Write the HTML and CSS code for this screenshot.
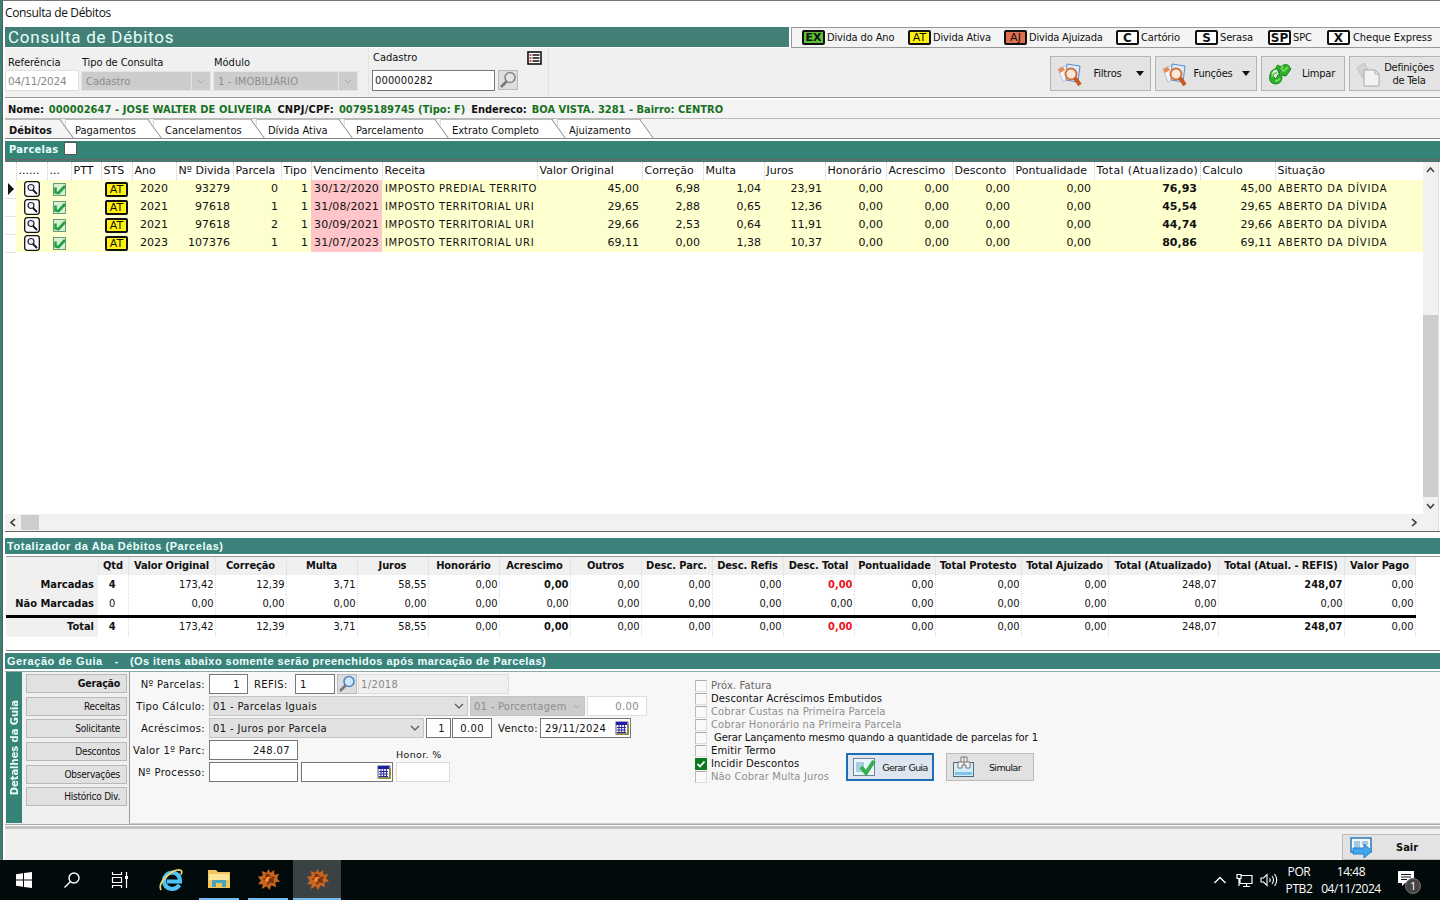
FILE: index.html
```html
<!DOCTYPE html>
<html lang="pt-BR">
<head>
    <meta charset="UTF-8">
    <meta name="viewport" content="width=device-width, initial-scale=1.0">
    <title>Consulta de Débitos</title>
    <link rel="stylesheet" href="styles.css">
</head>
<body>
    <svg class="sprite">
        <symbol id="lupa" viewBox="0 0 16 16">
            <rect x=".7" y=".7" width="14.6" height="14.6" rx="2.5" fill="#fff" stroke="#111" stroke-width="1.3"/>
            <circle cx="7" cy="6.5" r="3" fill="#eef" stroke="#223" stroke-width="1.2"/>
            <path d="M9 9l4 4" stroke="#112" stroke-width="1.8"/>
        </symbol>
        <symbol id="marca" viewBox="0 0 13 13">
            <rect x=".5" y=".5" width="12" height="12" fill="#d9efd2" stroke="#6a9a78"/>
            <path d="M2.500 4.500v5l3 .5L12 3" fill="none" stroke="#21a044" stroke-width="2.600"/>
        </symbol>
        <symbol id="busca" viewBox="0 0 28 26">
            <path d="M2 8l12-5 4 12-11 6z" fill="#f4f5fa" stroke="#b9bfd0"/>
            <path d="M11 3l13 2-2 16-12-2z" fill="#dfeafa" stroke="#5b8cc8"/>
            <path d="M2 8l5-2 2 3-5 3z" fill="#e98a55"/>
            <circle cx="15" cy="13" r="5.5" fill="#fbe9dc" stroke="#d0743e" stroke-width="2"/>
            <path d="M19 17l5 7" stroke="#c45a25" stroke-width="4"/>
        </symbol>
        <symbol id="pesquisa" viewBox="0 0 18 18">
            <circle cx="11" cy="6.500" r="5" fill="#cfe6fb" stroke="currentColor" stroke-width="1.6"/>
            <path d="M7.500 10.500L2 16" stroke="#777" stroke-width="2.6"/>
        </symbol>
        <symbol id="calendario" viewBox="0 0 14 14">
            <rect x="1" y="1" width="12" height="12" fill="#fff" stroke="#555"/>
            <rect x="1" y="1" width="11" height="3" fill="#1b1bb0"/>
            <path d="M2 6.500h9M2 9h9M2 11.500h9M4 4v8M6.700 4v8M9.400 4v8" stroke="#2828a0"/>
            <path d="M13 3v10H2" fill="none" stroke="#8a8420" stroke-width="1.600"/>
        </symbol>
        <symbol id="engrenagem" viewBox="0 0 24 24">
            <path d="M12 1l2 4 4-3v5l5-1-2 5 3 3-5 1 1 5-5-2-2 5-3-4-5 3 1-5-5 0 3-4-3-4 5-1-1-5 5 2z" fill="#c9651f"/>
            <path d="M12 6l3 3 4 0-2 3 1 4-4-1-3 3-1-4-4-2 3-2 0-4z" fill="#7a3310"/>
            <path d="M8 13q2-6 8-3-5 0-4 5z" fill="#ff8d35"/>
        </symbol>
    </svg>

    <div class="window">
        <div class="titlebar">Consulta de Débitos</div>

        <div class="header">
            <div class="header-title"><span>Consulta de Débitos</span></div>
            <div class="legend">
                <span class="tag ex">EX</span><span class="leg l1">Divida do Ano</span>
                <span class="tag at">AT</span><span class="leg l2">Divida Ativa</span>
                <span class="tag aj">AJ</span><span class="leg l3">Divida Ajuizada</span>
                <span class="tag">C</span><span class="leg l4">Cartório</span>
                <span class="tag">S</span><span class="leg l5">Serasa</span>
                <span class="tag">SP</span><span class="leg l6">SPC</span>
                <span class="tag">X</span><span class="leg l7">Cheque Express</span>
            </div>
        </div>

        <div class="toolbar">
            <div class="filter f-ref"><label>Referência</label><div class="box off">04/11/2024</div></div>
            <div class="filter f-tipo"><label>Tipo de Consulta</label><div class="drop">Cadastro<i><svg width="8" height="5"><path d="M1 1l3 3 3-3" fill="none" stroke="#aaa"/></svg></i></div></div>
            <div class="filter f-mod"><label>Módulo</label><div class="drop">1 - IMOBILIÁRIO<i><svg width="8" height="5"><path d="M1 1l3 3 3-3" fill="none" stroke="#aaa"/></svg></i></div></div>
            <div class="filter f-cad">
                <div class="cad-head"><label>Cadastro</label>
                    <svg width="15" height="14"><rect x="1" y="1" width="13" height="12" fill="#fff" stroke="#111" stroke-width="1.600"/><path d="M5.500 4h7M5.500 7h7M5.500 10h7" stroke="#111" stroke-width="1.500"/><path d="M2.500 4h2M2.500 7h2M2.500 10h2" stroke="#a22" stroke-width="1.500"/></svg>
                </div>
                <div class="cad-row"><div class="box">000000282</div><span class="mini"><svg class="gray" width="18" height="18"><use href="#pesquisa"/></svg></span></div>
            </div>
            <div class="actions">
                <div class="tool b1"><svg width="28" height="26"><use href="#busca"/></svg><span>Filtros</span><b class="arrow"></b></div>
                <div class="tool b2"><svg width="28" height="26"><use href="#busca"/></svg><span>Funções</span><b class="arrow"></b></div>
                <div class="tool b3">
                    <svg width="26" height="26" viewBox="0 0 26 26"><path d="M3 15q0-7 7-7l2 4 3-6-5-2M12 10q2-8 9-6l3 4-5 7-7-1zM3 14q-2 8 5 9 7 0 7-7l-4-2-2 4-4-4z" fill="#2fae2b" stroke="#1b8a22"/><path d="M5 16q1-4 5-4M16 5q-3 3 1 5l4-4M8 20q4 0 5-3" fill="none" stroke="#6bd853" stroke-width="2"/></svg>
                    <span>Limpar</span>
                </div>
                <div class="tool b4">
                    <svg width="26" height="28" viewBox="0 0 26 28"><path d="M2 8l7-5 4 7-7 5zM6 16l6-3v8z" fill="#d3d3d3" stroke="#c0c0c0"/><path d="M9 10h11l4 4v12H9z" fill="#f3f3f3" stroke="#aaa"/><path d="M20 10v4h4" fill="none" stroke="#aaa"/></svg>
                    <span>Definições<br>de Tela</span>
                </div>
            </div>
        </div>

        <div class="person"><b>Nome:</b><em class="p1">000002647 - JOSE WALTER DE OLIVEIRA</em><b class="n2">CNPJ/CPF:</b><em class="p2">00795189745 (Tipo: F)</em><b>Endereco:</b><em class="p3">BOA VISTA. 3281 - Bairro: CENTRO</em></div>

        <div class="tabs">
            <div class="tab t1 active">Débitos</div>
            <div class="tab t2">Pagamentos</div>
            <div class="tab t3">Cancelamentos</div>
            <div class="tab t4">Dívida Ativa</div>
            <div class="tab t5">Parcelamento</div>
            <div class="tab t6">Extrato Completo</div>
            <div class="tab t7">Ajuizamento</div>
        </div>

        <div class="parcelas-bar"><span>Parcelas</span><i></i></div>

        <div class="grid-box">
            <div class="grid-main">
                <table class="grid">
                    <colgroup>
                        <col style="width:11px"><col style="width:31px"><col style="width:24px"><col style="width:30px"><col style="width:31px"><col style="width:44px"><col style="width:57px"><col style="width:48px"><col style="width:30px"><col style="width:71px"><col style="width:155px"><col style="width:105px"><col style="width:61px"><col style="width:61px"><col style="width:61px"><col style="width:61px"><col style="width:66px"><col style="width:61px"><col style="width:81px"><col style="width:106px"><col style="width:75px"><col style="width:148px">
                    </colgroup>
                    <thead>
                        <tr><th></th><th>......</th><th>...</th><th>PTT</th><th>STS</th><th>Ano</th><th class="tight">Nº Divida</th><th>Parcela</th><th>Tipo</th><th class="tight">Vencimento</th><th>Receita</th><th>Valor Original</th><th>Correção</th><th>Multa</th><th>Juros</th><th>Honorário</th><th>Acrescimo</th><th>Desconto</th><th>Pontualidade</th><th class="wide">Total (Atualizado)</th><th>Calculo</th><th>Situação</th></tr>
                    </thead>
                    <tbody>
                        <tr><td class="ind"><b></b></td><td class="ic"><svg width="16" height="16"><use href="#lupa"/></svg></td><td class="ic"><svg width="13" height="13"><use href="#marca"/></svg></td><td></td><td class="ic"><span class="tag at">AT</span></td><td class="c">2020</td><td>93279</td><td>0</td><td>1</td><td class="venc">30/12/2020</td><td class="txt rec">IMPOSTO PREDIAL TERRITO</td><td>45,00</td><td>6,98</td><td>1,04</td><td>23,91</td><td>0,00</td><td>0,00</td><td>0,00</td><td>0,00</td><td class="tot">76,93</td><td>45,00</td><td class="txt">ABERTO DA DÍVIDA</td></tr>
                        <tr><td class="ind"></td><td class="ic"><svg width="16" height="16"><use href="#lupa"/></svg></td><td class="ic"><svg width="13" height="13"><use href="#marca"/></svg></td><td></td><td class="ic"><span class="tag at">AT</span></td><td class="c">2021</td><td>97618</td><td>1</td><td>1</td><td class="venc">31/08/2021</td><td class="txt rec">IMPOSTO TERRITORIAL URI</td><td>29,65</td><td>2,88</td><td>0,65</td><td>12,36</td><td>0,00</td><td>0,00</td><td>0,00</td><td>0,00</td><td class="tot">45,54</td><td>29,65</td><td class="txt">ABERTO DA DÍVIDA</td></tr>
                        <tr><td class="ind"></td><td class="ic"><svg width="16" height="16"><use href="#lupa"/></svg></td><td class="ic"><svg width="13" height="13"><use href="#marca"/></svg></td><td></td><td class="ic"><span class="tag at">AT</span></td><td class="c">2021</td><td>97618</td><td>2</td><td>1</td><td class="venc">30/09/2021</td><td class="txt rec">IMPOSTO TERRITORIAL URI</td><td>29,66</td><td>2,53</td><td>0,64</td><td>11,91</td><td>0,00</td><td>0,00</td><td>0,00</td><td>0,00</td><td class="tot">44,74</td><td>29,66</td><td class="txt">ABERTO DA DÍVIDA</td></tr>
                        <tr><td class="ind"></td><td class="ic"><svg width="16" height="16"><use href="#lupa"/></svg></td><td class="ic"><svg width="13" height="13"><use href="#marca"/></svg></td><td></td><td class="ic"><span class="tag at">AT</span></td><td class="c">2023</td><td>107376</td><td>1</td><td>1</td><td class="venc">31/07/2023</td><td class="txt rec">IMPOSTO TERRITORIAL URI</td><td>69,11</td><td>0,00</td><td>1,38</td><td>10,37</td><td>0,00</td><td>0,00</td><td>0,00</td><td>0,00</td><td class="tot">80,86</td><td>69,11</td><td class="txt">ABERTO DA DÍVIDA</td></tr>
                    </tbody>
                </table>
                <div class="hscroll">
                    <svg width="16" height="15"><path d="M10 4L6 7.500l4 3.500" fill="none" stroke="#333" stroke-width="1.600"/></svg>
                    <i></i>
                    <svg width="16" height="15"><path d="M5 4l4 3.500L5 11" fill="none" stroke="#333" stroke-width="1.600"/></svg>
                </div>
            </div>
            <div class="vscroll">
                <svg width="15" height="16"><path d="M4 10l3.500-4L11 10" fill="none" stroke="#444" stroke-width="1.600"/></svg>
                <i></i>
                <svg width="15" height="16"><path d="M4 6l3.500 4L11 6" fill="none" stroke="#444" stroke-width="1.600"/></svg>
            </div>
        </div>

        <div class="bar bar-total"><span>Totalizador da Aba Débitos (Parcelas)</span></div>

        <div class="totals-box">
            <table class="totals">
                <colgroup>
                    <col style="width:92px"><col style="width:30px"><col style="width:87px"><col style="width:71px"><col style="width:71px"><col style="width:71px"><col style="width:71px"><col style="width:71px"><col style="width:71px"><col style="width:71px"><col style="width:71px"><col style="width:71px"><col style="width:81px"><col style="width:86px"><col style="width:87px"><col style="width:110px"><col style="width:126px"><col style="width:71px">
                </colgroup>
                <tr class="head"><th></th><th>Qtd</th><th>Valor Original</th><th>Correção</th><th>Multa</th><th>Juros</th><th>Honorário</th><th>Acrescimo</th><th>Outros</th><th>Desc. Parc.</th><th>Desc. Refis</th><th>Desc. Total</th><th>Pontualidade</th><th>Total Protesto</th><th>Total Ajuizado</th><th>Total (Atualizado)</th><th>Total (Atual. - REFIS)</th><th>Valor Pago</th></tr>
                <tr><th>Marcadas</th><td class="q"><b>4</b></td><td>173,42</td><td>12,39</td><td>3,71</td><td>58,55</td><td>0,00</td><td><b>0,00</b></td><td>0,00</td><td>0,00</td><td>0,00</td><td class="red">0,00</td><td>0,00</td><td>0,00</td><td>0,00</td><td>248,07</td><td><b>248,07</b></td><td>0,00</td></tr>
                <tr class="nao"><th>Não Marcadas</th><td class="q">0</td><td>0,00</td><td>0,00</td><td>0,00</td><td>0,00</td><td>0,00</td><td>0,00</td><td>0,00</td><td>0,00</td><td>0,00</td><td>0,00</td><td>0,00</td><td>0,00</td><td>0,00</td><td>0,00</td><td>0,00</td><td>0,00</td></tr>
                <tr class="sum"><th>Total</th><td class="q"><b>4</b></td><td>173,42</td><td>12,39</td><td>3,71</td><td>58,55</td><td>0,00</td><td><b>0,00</b></td><td>0,00</td><td>0,00</td><td>0,00</td><td class="red">0,00</td><td>0,00</td><td>0,00</td><td>0,00</td><td>248,07</td><td><b>248,07</b></td><td>0,00</td></tr>
            </table>
        </div>

        <div class="bar bar-guia"><span>Geração de Guia</span><span class="dash">-</span><span class="hint">(Os itens abaixo somente serão preenchidos após marcação de Parcelas)</span></div>

        <div class="guia">
            <div class="side"><span>Detalhes da Guia</span></div>
            <div class="menu">
                <div class="on">Geração</div>
                <div>Receitas</div>
                <div>Solicitante</div>
                <div>Descontos</div>
                <div>Observações</div>
                <div>Histórico Div.</div>
            </div>
            <div class="panel">
                <div class="form">
                    <div class="row"><label>Nº Parcelas:</label><div class="in w39 r">1</div><label class="refis">REFIS:</label><div class="in w40">1</div><span class="mini m2"><svg width="18" height="18"><use href="#pesquisa"/></svg></span><div class="in off w150">1/2018</div></div>
                    <div class="row"><label>Tipo Cálculo:</label><div class="sel w259">01 - Parcelas Iguais<svg width="10" height="6"><path d="M1 1l4 4 4-4" fill="none" stroke="#555" stroke-width="1.200"/></svg></div><div class="sel dis w115">01 - Porcentagem<svg width="8" height="5"><path d="M1 1l3 3 3-3" fill="none" stroke="#aaa"/></svg></div><div class="in off white w59 r">0.00</div></div>
                    <div class="row"><label>Acréscimos:</label><div class="sel w214">01 - Juros por Parcela<svg width="10" height="6"><path d="M1 1l4 4 4-4" fill="none" stroke="#555" stroke-width="1.200"/></svg></div><div class="in w25 r">1</div><div class="in w39b r">0.00</div><label class="venct">Vencto:</label><div class="in w88">29/11/2024<svg width="14" height="14"><use href="#calendario"/></svg></div></div>
                    <div class="row"><label>Valor 1º Parc:</label><div class="in w89 r">248.07</div><label class="honor">Honor. %</label></div>
                    <div class="row"><label>Nº Processo:</label><div class="in w89"></div><div class="in w91"><svg width="14" height="14"><use href="#calendario"/></svg></div><div class="in off white w53"></div></div>
                </div>
                <div class="options">
                    <div class="chk dim2"><i></i>Próx. Fatura</div>
                    <div class="chk"><i></i>Descontar Acréscimos Embutidos</div>
                    <div class="chk dim"><i></i>Cobrar Custas na Primeira Parcela</div>
                    <div class="chk dim"><i></i>Cobrar Honorário na Primeira Parcela</div>
                    <div class="chk gerar"><i></i>Gerar Lançamento mesmo quando a quantidade de parcelas for 1</div>
                    <div class="opt-bottom">
                        <div class="opt-list">
                            <div class="chk"><i></i>Emitir Termo</div>
                            <div class="chk"><i class="yes"><svg width="10" height="10"><path d="M1.500 5l2.500 2.500L8.500 2.500" fill="none" stroke="#fff" stroke-width="1.800"/></svg></i>Incidir Descontos</div>
                            <div class="chk dim"><i></i>Não Cobrar Multa Juros</div>
                        </div>
                        <div class="go focus"><svg width="26" height="24" viewBox="0 0 26 24"><rect x="1.500" y="3.500" width="21" height="17" fill="#e9f5fb" stroke="#6b8796"/><path d="M4 7h8v10H4z" fill="#a9cde0"/><path d="M9 12l5 6L22 6" fill="none" stroke="#35b050" stroke-width="4"/></svg><span>Gerar Guia</span></div>
                        <div class="go"><svg class="down" width="26" height="24" viewBox="0 0 26 24"><rect x="2.500" y="7.500" width="20" height="14" fill="#d4ecf8" stroke="#4c6c80"/><path d="M10 7V2h6v5M13 2v8M7 7h12v6h-4v-3h-4v3H7z" fill="#f5f5f5" stroke="#777"/><path d="M4 17h17v3H4z" fill="#7fc4e6"/></svg><span>Simular</span></div>
                    </div>
                </div>
            </div>
        </div>

        <div class="footer">
            <div class="sair"><svg width="26" height="24" viewBox="0 0 26 24"><rect x="2" y="3" width="20" height="14" fill="#eef7fc" stroke="#2b7ab8" stroke-width="1.500"/><path d="M5 6h6v7H5zM13 6h6v4h-6z" fill="#a7c8dc"/><path d="M4 13h11v-4l8 7-8 7v-4H4z" fill="#42a5ee" stroke="#1e7fcb"/></svg><span>Sair</span></div>
        </div>
    </div>

    <div class="taskbar">
        <div class="task"><svg width="16" height="16"><path d="M0 2.200l7-1v6.300H0zM8 1.100L16 0v7.500H8zM0 8.500h7v6.300l-7-1zM8 8.500h8V16l-8-1.100z" fill="#fff"/></svg></div>
        <div class="task"><svg width="18" height="18"><circle cx="11" cy="7" r="5" fill="none" stroke="#fff" stroke-width="1.400"/><path d="M7.500 10.500L1.500 16.500" stroke="#fff" stroke-width="1.500"/></svg></div>
        <div class="task"><svg width="18" height="16"><path d="M1.500 0v2.500h9V0M1.500 16v-2.500h9V16M1.500 5.500h9v5h-9zM15.500 0v16" fill="none" stroke="#fff" stroke-width="1.200"/><path d="M14 4h3v3h-3z" fill="#fff"/></svg></div>
        <div class="task ie"><svg width="26" height="26" viewBox="0 0 26 26"><path d="M21.500 18Q18.500 22 14 22 6.500 21.500 6 14 6.500 6 14 5.500q8 .5 8 9H9" fill="none" stroke="#4fc3f3" stroke-width="4.200"/><path d="M3 23Q0 17 9 9T23 3.500q1.500 1 0 4" fill="none" stroke="#f3d768" stroke-width="1.700"/></svg></div>
        <div class="task open"><svg width="22" height="20"><path d="M0 1h8l2 2h12v16H0z" fill="#f2c55c"/><path d="M1 5h20v6H1z" fill="#fde59a"/><path d="M4 18v-7h14v7h-4v-4H8v4z" fill="#4aa3b8"/></svg></div>
        <div class="task open"><svg width="23" height="23"><use href="#engrenagem"/></svg></div>
        <div class="task open current"><svg width="23" height="23"><use href="#engrenagem"/></svg></div>
        <div class="tray">
            <svg width="14" height="8"><path d="M1.500 7L7 1.500 12.500 7" fill="none" stroke="#fff" stroke-width="1.300"/></svg>
            <svg class="net" width="18" height="15"><path d="M5 2.500h11v8H4M4 6v4.500M1 1.500h4v4H1zM3 5.500V13M7 13.500h7M10.500 10.500v3" fill="none" stroke="#fff" stroke-width="1.200"/></svg>
            <svg class="vol" width="18" height="14"><path d="M1 5h2.500L7 1.500v11L3.500 9H1zM9.500 5q1.500 2 0 4M12 3q3 4 0 8M14.500 1q4.500 6 0 12" fill="none" stroke="#fff" stroke-width="1.100"/></svg>
            <div class="lang">POR<br>PTB2</div>
            <div class="clock">14:48<br>04/11/2024</div>
            <svg class="note" width="26" height="26" viewBox="0 0 26 26"><path d="M1 2h16v12H8l-3 3v-3H1z" fill="#fff"/><path d="M4 5.500h10M4 8h10M4 10.500h6" stroke="#111"/><circle cx="16" cy="17" r="7.500" fill="#444" stroke="#777"/><text x="16" y="21" text-anchor="middle" font-size="11" font-family="Open Sans, sans-serif" fill="#fff">1</text></svg>
        </div>
    </div>
</body>
</html>
```

FILE: styles.css
```css
* {
    box-sizing: border-box;
}
body {
    margin: 0;
    width: 1440px;
    height: 900px;
    overflow: hidden;
    background: #3a7f78;
    font-family: "DejaVu Sans Condensed", "DejaVu Sans", sans-serif;
    font-stretch: condensed;
    font-size: 11px;
    color: #111;
    white-space: nowrap;
}
svg {
    display: block;
    flex: none;
}
.sprite {
    display: none;
}
.window {
    height: 860px;
    margin-left: 2px;
    border-left: 1px solid #5c5c5c;
    border-top: 1px solid #777;
    background: #fff;
    display: flex;
    flex-direction: column;
    padding-left: 2px;
}
.window > div {
    flex: none;
}
.titlebar {
    height: 26px;
    font: 12px/24px "Open Sans", sans-serif;
    letter-spacing: -0.35px;
}

/* header + legend */
.header {
    height: 21px;
    display: flex;
}
.header-title {
    width: 784px;
    height: 20px;
    background: #447f77;
    color: #e2fffb;
    font: 17px/20px Roboto, "Liberation Sans", sans-serif;
    letter-spacing: 0.75px;
    padding-left: 3px;
}
.legend {
    flex: 1;
    margin-left: 2px;
    background: #f4f4f4;
    border: 1px solid #999;
    border-right: none;
    display: flex;
    align-items: center;
    padding-left: 10px;
    font-size: 11px;
}
.tag {
    display: inline-block;
    width: 23px;
    height: 15px;
    border: 2px solid #111;
    border-radius: 2px;
    background: #fff;
    font: bold 12px/12px "DejaVu Sans", sans-serif;
    text-align: center;
    flex: none;
}
.ex { background: #5cc034; font-size: 11px; }
.at { background: #fff20a; font-weight: normal; font-size: 11px; }
.aj { background: #e07050; font-weight: normal; font-size: 11px; }
.leg {
    padding-left: 2px;
    letter-spacing: -0.13px;
}
.l1 { width: 83px; }
.l2 { width: 73px; }
.l3 { width: 89px; letter-spacing: -0.2px; }
.l4 { width: 56px; }
.l5 { width: 50px; }
.l6 { width: 36px; }
.l7 { padding-left: 3px; letter-spacing: -0.05px; }

/* toolbar */
.toolbar {
    height: 50px;
    background: #f0f0f0;
    border-bottom: 1px solid #999;
    display: flex;
}
.filter {
    padding-top: 7px;
}
.filter label {
    display: block;
    height: 15px;
    line-height: 15px;
}
.f-ref { width: 76px; }
.f-ref label { padding-left: 3px; }
.f-tipo { width: 132px; }
.f-tipo label { padding-left: 1px; letter-spacing: -0.1px; }
.f-mod { width: 155px; }
.f-mod label { padding-left: 1px; }
.box {
    height: 21px;
    border: 1px solid #777;
    background: #fff;
    line-height: 20px;
    padding-left: 3px;
}
.box.off {
    width: 74px;
    border-color: #e0e0e0;
    color: #888;
    font-family: "DejaVu Sans", sans-serif;
    font-stretch: normal;
    font-size: 10.5px;
    letter-spacing: -0.2px;
    padding-left: 2px;
}
.drop {
    height: 20px;
    background: #ccc;
    border: 1px solid #e4e4e4;
    line-height: 19px;
    color: #8c8c8c;
    display: flex;
    justify-content: space-between;
    padding-left: 4px;
    margin-top: 1px;
}
.drop i {
    width: 19px;
    border-left: 1px solid #e4e4e4;
    display: flex;
    align-items: center;
    justify-content: center;
}
.f-tipo .drop { width: 130px; }
.f-mod .drop { width: 145px; letter-spacing: 0.15px; }
.f-cad {
    width: 181px;
    padding: 3px 0 0 3px;
    border-left: 1px solid #e4e4e4;
    border-right: 1px solid #e4e4e4;
}
.cad-head {
    display: flex;
    justify-content: space-between;
    padding-right: 6px;
    height: 19px;
    padding-left: 1px;
}
.cad-head label { line-height: 13px; }
.cad-row {
    display: flex;
    gap: 3px;
}
.cad-row .box {
    width: 123px;
    padding-left: 2px;
    letter-spacing: 0.15px;
}
.mini {
    width: 20px;
    height: 20px;
    background: #ddd;
    border: 1px solid #bbb;
    color: #4a86c4;
}
.gray {
    color: #888;
    filter: grayscale(1);
}
.actions {
    margin-left: auto;
    display: flex;
    padding-top: 8px;
}
.tool {
    height: 35px;
    background: #e3e3e3;
    border: 1px solid #b4b4b4;
    display: flex;
    align-items: center;
    padding-left: 5px;
}
.tool span {
    flex: 1;
    text-align: center;
    line-height: 13px;
    letter-spacing: -0.2px;
}
.b1 { width: 101px; margin-right: 4px; }
.b2 { width: 102px; margin-right: 4px; }
.b3 { width: 84px; margin-right: 4px; }
.b4 { width: 91px; border-right: none; padding-right: 3px; }
.b1 span, .b2 span { padding-right: 5px; }
.arrow {
    border: 4px solid transparent;
    border-top: 5px solid #111;
    border-bottom: 0;
    margin-right: 6px;
}

/* taxpayer line */
.person {
    height: 21px;
    background: #f4f4f4;
    border-top: 2px solid #fff;
    border-bottom: 1px solid #bbb;
    line-height: 19px;
    padding-left: 3px;
    font-weight: bold;
    display: flex;
}
.person em {
    font-style: normal;
    color: #15711d;
    padding: 0 6px 0 5px;
}
.person b { letter-spacing: -0.05px; }
.person .p1 { letter-spacing: 0.08px; }
.person .n2 { letter-spacing: 0.2px; }

/* tabs */
.tabs {
    height: 20px;
    background: #f4f4f4;
    display: flex;
    border-bottom: 1px solid #888;
    position: relative;
    z-index: 0;
}
.tab {
    background: #fff;
    clip-path: polygon(0 0, calc(100% - 14px) 0, 100% 100%, 0 100%);
    position: relative;
    line-height: 21px;
    border-top: 1px solid #bbb;
    padding-left: 11px;
    margin-right: -10px;
}
.tab::after {
    content: "";
    position: absolute;
    right: 7px;
    top: -3px;
    height: 26px;
    border-right: 1px solid #999;
    transform: rotate(-36deg);
}
.active {
    font-weight: bold;
    padding-left: 4px;
    background: #f4f4f4;
}
.t1 { width: 70px; z-index: 7; }
.t2 { width: 98px; z-index: 6; padding-left: 9px; }
.t3 { width: 113px; z-index: 5; }
.t4 { width: 98px; z-index: 4; }
.t5 { width: 106px; z-index: 3; }
.t6 { width: 127px; z-index: 2; }
.t7 { width: 98px; z-index: 1; }
.tab:not(.active) { border-left: 1px solid #ddd; }

.parcelas-bar {
    height: 23px;
    background: #368478;
    border-top: 2px solid #fff;
    border-bottom: 3px double #666;
    color: #e8fffb;
    font-weight: bold;
    line-height: 18px;
    padding-left: 4px;
    display: flex;
}
.parcelas-bar span { letter-spacing: 0.3px; }
.parcelas-bar i {
    width: 13px;
    height: 13px;
    margin: 1px 0 0 6px;
    background: #fff;
    border: 1px solid #555;
}

/* debts grid */
.grid-box {
    height: 370px;
    display: flex;
    border-bottom: 1px solid #666;
}
.grid-main {
    width: 1418px;
    display: flex;
    flex-direction: column;
}
.grid, .totals {
    table-layout: fixed;
    border-collapse: collapse;
}
.grid {
    width: 1418px;
    font-family: "DejaVu Sans", sans-serif;
    font-stretch: normal;
    font-size: 11px;
}
.grid th {
    height: 18px;
    padding: 0 0 2px 2px;
    font-weight: normal;
    text-align: left;
    border-right: 1px dotted #ccc;
}
.grid th.tight { letter-spacing: 0; }
.grid th.wide { letter-spacing: 0.35px; }
.grid td {
    height: 18px;
    line-height: 16px;
    padding: 0 3px 0 0;
    text-align: right;
    background: #feffcf;
}
.grid td.ind {
    background: #fff;
    border-bottom: 1px solid #e4e4e4;
    padding: 0;
}
.ind b {
    display: block;
    width: 0;
    margin-left: 3px;
    border: 6px solid transparent;
    border-left-color: #111;
    border-right: 0;
}
.grid td.ic {
    padding: 0;
    text-align: center;
}
.grid .ic svg { margin: 0 auto; }
.grid .ic .tag {
    display: block;
    margin: 0 auto;
}
.grid td.c { text-align: center; padding: 0; }
.grid td.venc { background: #ffc5c8; letter-spacing: 0.15px; }
.grid td.txt {
    text-align: left;
    font-size: 10px;
    letter-spacing: 0.85px;
    padding: 0 0 1px 3px;
}
.grid td.rec { letter-spacing: 0.62px; }
.grid td.tot { font-weight: bold; }
.hscroll {
    margin-top: auto;
    height: 17px;
    background: #f1f1f1;
    display: flex;
    align-items: center;
}
.hscroll i {
    width: 18px;
    height: 15px;
    background: #cdcdcd;
    margin-right: auto;
}
.vscroll {
    width: 16px;
    background: #f1f1f1;
    border-right: 1px solid #ddd;
    display: flex;
    flex-direction: column;
}
.vscroll i {
    height: 182px;
    background: #cdcdcd;
    margin: auto 0 1px;
}
.vscroll svg:last-child { margin-bottom: 17px; }

/* section bars */
.bar {
    height: 16px;
    background: #3a827a;
    color: #eafffc;
    font: bold 11px/16px "Liberation Sans", sans-serif;
    padding-left: 2px;
    letter-spacing: 0.55px;
    display: flex;
}
.bar-total { margin: 6px 0 2px; }
.bar-guia { margin: 2px 0 2px; }
.dash { margin: 0 11px 0 12px; }
.hint { letter-spacing: 0.45px; }

/* totals */
.totals-box {
    height: 95px;
    margin-left: 1px;
    border-top: 1px solid #999;
    border-bottom: 1px solid #888;
}
.totals {
    width: 1409px;
}
.totals th {
    height: 19px;
    background: #f0f0f0;
    padding: 0 4px 0 0;
    text-align: right;
}
.totals .head th {
    padding: 0 0 2px;
    height: 18px;
    text-align: center;
    border-right: 1px solid #e4e4e4;
    letter-spacing: -0.1px;
}
.totals td {
    padding: 0 1px 0 0;
    text-align: right;
    border-right: 1px dotted #ddd;
}
.totals td.q { text-align: center; }
.totals .nao th, .totals .nao td {
    height: 22px;
    padding-bottom: 1px;
}
.totals .sum th, .totals .sum td {
    border-top: 3px solid #000;
    height: 21px;
    padding-bottom: 2px;
}
.red {
    color: #f01020;
    font-weight: bold;
}

/* guia */
.guia {
    height: 154px;
    display: flex;
    background: #f0f0f0;
    border-bottom: 1px solid #aaa;
    border-top: 1px solid #8aa;
}
.side {
    width: 16px;
    margin: 0 3px 1px 1px;
    background: #368478;
    color: #e8fffb;
    display: flex;
    align-items: center;
    justify-content: center;
}
.side span {
    writing-mode: vertical-rl;
    transform: rotate(180deg);
    font-weight: bold;
}
.menu {
    width: 104px;
    padding: 2px 2px 0 1px;
}
.menu div {
    height: 19px;
    line-height: 17px;
    margin-bottom: 3.7px;
    background: #e1e1e1;
    border: 1px solid #b9b9b9;
    text-align: right;
    padding-right: 6px;
    font-size: 10px;
    letter-spacing: -0.25px;
}
.menu .on {
    font-weight: bold;
    font-size: 10.5px;
    letter-spacing: -0.2px;
}
.panel {
    flex: 1;
    background: #f7f7f7;
    border-left: 1px solid #999;
    border-bottom: 1px solid #ccc;
    display: flex;
    font-family: "DejaVu Sans", sans-serif;
    font-stretch: normal;
    font-size: 10px;
}
.form {
    width: 565px;
    padding-top: 1px;
    letter-spacing: 0.35px;
}
.row {
    height: 22px;
    display: flex;
    align-items: center;
}
.row label:first-child {
    width: 75px;
    margin-right: 4px;
    text-align: right;
}
.in {
    height: 20px;
    background: #fff;
    border: 1px solid #777;
    line-height: 17px;
    padding: 0 4px;
    display: flex;
    align-items: center;
    justify-content: space-between;
}
.in.r {
    justify-content: flex-end;
    padding-right: 7px;
}
.in.off {
    background: #f0f0f0;
    border-color: #ddd;
    color: #888;
}
.in.white { background: #fff; }
.in svg { margin-left: auto; }
.sel {
    height: 20px;
    background: #e1e1e1;
    border: 1px solid #c4c4c4;
    display: flex;
    align-items: center;
    justify-content: space-between;
    padding: 0 3px 0 3px;
    margin-right: 2px;
}
.dis {
    background: #ccc;
    color: #8c8c8c;
    letter-spacing: 0.25px;
}
.w39 { width: 39px; }
.w40 { width: 40px; }
.w150 { width: 151px; padding-left: 2px; }
.w259 { width: 259px; }
.w115 { width: 115px; }
.w59 { width: 60px; }
.w214 { width: 215px; }
.w25 { width: 25px; margin-right: 1px; }
.w39b { width: 40px; }
.in.w25.r { padding-right: 5px; }
.w88 { width: 91px; }
.in.w88, .in.w91 { padding-right: 1px; }
.w89 { width: 89px; margin-right: 3px; }
.w91 { width: 92px; margin-right: 3px; }
.w53 { width: 54px; }
.m2 { margin: 0 1px 0 2px; }
.refis {
    width: 41px;
    margin: 0 0 0 6px;
}
.venct {
    width: 42px;
    margin: 0 0 0 6px;
}
.honor {
    margin: 8px 0 0 95px;
    font-size: 9.5px;
}
.options {
    padding-top: 7px;
    letter-spacing: 0.12px;
}
.chk {
    height: 13px;
    display: flex;
    align-items: center;
    gap: 4px;
}
.chk i {
    width: 12px;
    height: 12px;
    border: 1px solid #ddd;
    border-top-color: #aaa;
    border-left-color: #bbb;
    background: #f9f9f9;
}
.chk i.yes {
    background: #0a7a1d;
    border-color: #0a7a1d;
}
.gerar {
    gap: 7px;
    letter-spacing: -0.12px;
}
.dim { color: #8f8f8f; }
.dim2 { color: #666; }
.opt-bottom {
    display: flex;
}
.opt-list {
    width: 151px;
}
.go {
    width: 88px;
    height: 28px;
    margin: 9px 12px 0 0;
    border: 1px solid #bbb;
    background: #e1e1e1;
    display: flex;
    align-items: center;
    padding-left: 4px;
    font-size: 9.5px;
    letter-spacing: -0.6px;
}
.go span { flex: 1; text-align: center; }
.focus {
    border: 2px solid #1d6fb5;
    background: #dde6ef;
}

.footer {
    flex: 1 !important;
    background: #f0f0f0;
    border-top: 3px solid #c4c4c4;
    margin-top: 1px;
    display: flex;
    justify-content: flex-end;
    align-items: flex-end;
}
.sair {
    width: 98px;
    height: 26px;
    background: #e3e3e3;
    border: 1px solid #bbb;
    border-right: none;
    display: flex;
    align-items: center;
    padding-left: 6px;
    font-weight: bold;
}
.sair span { margin-left: 21px; }

/* windows taskbar */
.taskbar {
    height: 40px;
    background: #020a0c;
    display: flex;
    color: #fff;
}
.task {
    width: 48px;
    margin-right: 1px;
    height: 40px;
    display: flex;
    align-items: center;
    justify-content: center;
}
.task:nth-child(-n+2) { margin-right: 0; }
.ie { padding-left: 4px; }
.open { border-bottom: 2px solid #76b9ed; width: 40px; margin: 0 4px 0 5px; }
.current { background: #3a4244; width: 48px; margin: 0 0 0 1px; }
.tray {
    margin-left: auto;
    display: flex;
    align-items: center;
    font: 12px/17px "Open Sans", sans-serif;
    letter-spacing: -0.4px;
    text-align: center;
}
.net { margin-left: 9px; }
.vol { margin-left: 6px; }
.lang { width: 42px; }
.clock { width: 62px; }
.note { margin: 4px 17px 0 15px; }
```
